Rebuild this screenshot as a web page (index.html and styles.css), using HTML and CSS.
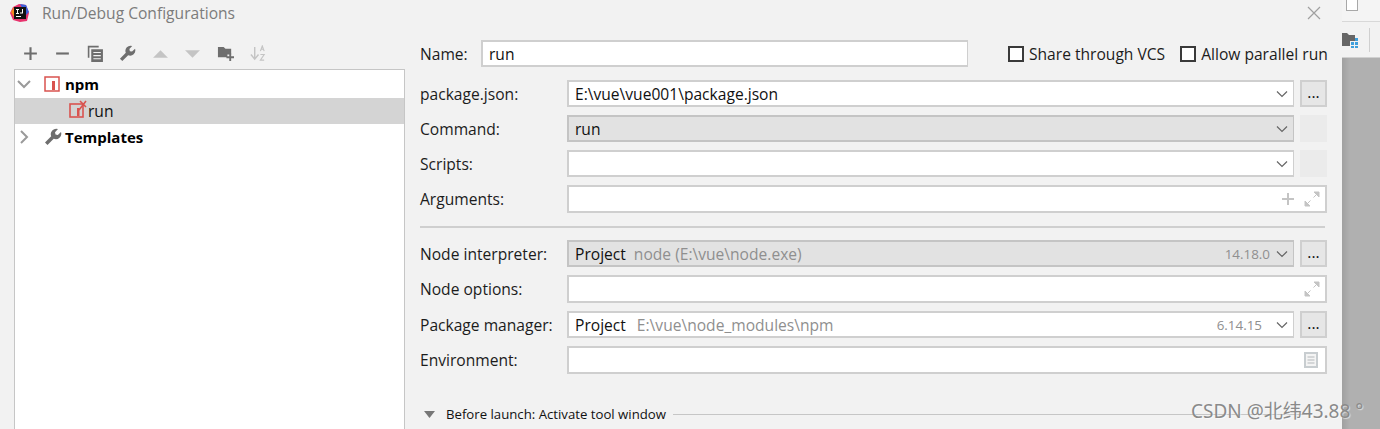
FILE: index.html
```html
<!DOCTYPE html>
<html lang="en">
<head>
<meta charset="utf-8">
<title>Run/Debug Configurations</title>
<link rel="stylesheet" href="styles.css">
</head>
<body>
<div class="screen">
  <div class="dialog">
    <header class="titlebar">
      <svg class="app-logo" width="20" height="20" viewBox="0 0 20 20">
        <path d="M3 4 9 1l7 1 3 8-2 8-7 1-7-2-3-7z" fill="#e8336d"/>
        <path d="M10 1l6 1 3 7-3 3z" fill="#3b5ed8"/>
        <path d="M1 9l3-5 3 5-3 5z" fill="#f58a1f"/>
        <rect x="4" y="4" width="12" height="12" fill="#111"/>
        <rect x="6" y="13" width="5" height="1" fill="#fff"/>
        <rect x="6" y="6" width="3" height="1" fill="#fff"/>
        <rect x="7" y="6" width="1" height="5" fill="#fff"/>
        <rect x="6" y="10" width="3" height="1" fill="#fff"/>
        <path d="M10 6h3v4.500h-3v-1h2V6" fill="#fff"/>
      </svg>
      <span class="title">Run/Debug Configurations</span>
      <svg class="close" width="14" height="14" viewBox="0 0 14 14"><path d="M1 1l12 12M13 1 1 13" stroke="#a0a0a0" stroke-width="1.200" fill="none"/></svg>
    </header>
    <div class="main">
      <aside class="left">
        <div class="toolbar">
          <svg class="tool" viewBox="0 0 16 16"><path d="M8 2v12M2 8h12" stroke="#6e6e6e" stroke-width="2" fill="none"/></svg>
          <svg class="tool" viewBox="0 0 16 16"><path d="M2 8h12" stroke="#6e6e6e" stroke-width="2" fill="none"/></svg>
          <svg class="tool" viewBox="0 0 16 16"><path d="M1.500 12V1.500H11" stroke="#6e6e6e" stroke-width="1.500" fill="none"/><rect x="4" y="4" width="11" height="12" fill="#6e6e6e"/><path d="M6 7h7M6 10h7M6 13h7" stroke="#f2f2f2" fill="none"/></svg>
          <svg class="tool" viewBox="0 0 18 18"><path d="M1 14.500 7.200 8.300A5.500 5.500 0 0 1 14 1L11 4.200 11.500 6.500 13.800 7 17 4A5.500 5.500 0 0 1 9.700 10.800L3.500 17z" fill="#6e6e6e"/></svg>
          <svg class="tool" viewBox="0 0 16 16"><path d="M1 12 8 5l7 7z" fill="#c4c4c4"/></svg>
          <svg class="tool" viewBox="0 0 16 16"><path d="M1 5h14l-7 7z" fill="#c4c4c4"/></svg>
          <svg class="tool" viewBox="0 0 18 18"><path d="M1 2h6l2 2h6v6h-4v3H1z" fill="#6e6e6e"/><path d="M14 9v8M10 13h8" stroke="#6e6e6e" stroke-width="2" fill="none"/></svg>
          <svg class="tool" viewBox="0 0 18 18"><path d="M5 2v12M1 10l4 5 4-5" stroke="#c4c4c4" stroke-width="1.500" fill="none"/><path d="M11 6.500 13 1l2 5.500M11.800 4.500h2.500M11 10h4l-4 6h4" stroke="#c4c4c4" stroke-width="1.200" fill="none"/></svg>
        </div>
        <div class="tree">
          <div class="tree-row parent">
            <svg class="chev" width="14" height="14" viewBox="0 0 14 14"><path d="M1 4l6 6 6-6" stroke="#9a9a9a" stroke-width="2" fill="none"/></svg>
            <svg class="type-icon" width="16" height="16" viewBox="0 0 16 16"><rect x="1" y="1" width="14" height="14" fill="#fff" stroke="#d9534f" stroke-width="1.500"/><rect x="8" y="5" width="3" height="9" fill="#d9534f"/></svg>
            <span class="tree-label bold">npm</span>
          </div>
          <div class="tree-row child selected">
            <svg class="run-icon" width="19" height="19" viewBox="0 0 19 19"><rect x="1" y="4" width="13" height="13" fill="none" stroke="#d9534f" stroke-width="1.600"/><rect x="8" y="8" width="2.500" height="8" fill="#d9534f"/><path d="M11 1l6 6M17 1l-7 9" stroke="#d9534f" stroke-width="1.600" fill="none"/></svg>
            <span class="tree-label">run</span>
          </div>
          <div class="tree-row templates">
            <svg class="chev" width="14" height="14" viewBox="0 0 14 14"><path d="M4 1l6 6-6 6" stroke="#9a9a9a" stroke-width="2" fill="none"/></svg>
            <svg class="type-icon" width="18" height="18" viewBox="0 0 18 18"><path d="M1 14.500 7.200 8.300A5.500 5.500 0 0 1 14 1L11 4.200 11.500 6.500 13.800 7 17 4A5.500 5.500 0 0 1 9.700 10.800L3.500 17z" fill="#6e6e6e"/></svg>
            <span class="tree-label bold">Templates</span>
          </div>
        </div>
      </aside>
      <section class="form">
        <div class="name-row">
          <label class="name-label">Name:</label>
          <div class="field name-field">run</div>
          <span class="check first"><i class="box"></i>Share through VCS</span>
          <span class="check"><i class="box"></i>Allow parallel run</span>
        </div>
        <div class="group">
          <div class="row"><label>package.json:</label><div class="field combo">E:\vue\vue001\package.json<svg class="caret" width="12" height="8" viewBox="0 0 12 8"><path d="M1 1.500 6 6.500l5-5" stroke="#666" stroke-width="1.200" fill="none"/></svg></div><span class="more">...</span></div>
          <div class="row"><label>Command:</label><div class="field combo off">run<svg class="caret" width="12" height="8" viewBox="0 0 12 8"><path d="M1 1.500 6 6.500l5-5" stroke="#666" stroke-width="1.200" fill="none"/></svg></div><span class="more blank"></span></div>
          <div class="row"><label>Scripts:</label><div class="field combo"><svg class="caret" width="12" height="8" viewBox="0 0 12 8"><path d="M1 1.500 6 6.500l5-5" stroke="#666" stroke-width="1.200" fill="none"/></svg></div><span class="more blank"></span></div>
          <div class="row wide"><label>Arguments:</label><div class="field">
            <svg class="plus" width="14" height="14" viewBox="0 0 14 14"><path d="M7 1v12M1 7h12" stroke="#c4c4c4" stroke-width="2" fill="none"/></svg>
            <svg class="expand" width="16" height="16" viewBox="0 0 16 16"><path d="M10 1h5v5zM1 10v5h5zM13 3 9.500 6.500M3 13l3.500-3.500" fill="#c4c4c4" stroke="#c4c4c4"/></svg>
          </div></div>
        </div>
        <hr class="sep">
        <div class="group lower">
          <div class="row"><label>Node interpreter:</label><div class="field combo off"><span class="pj">Project</span><span class="dim">node (E:\vue\node.exe)</span><span class="ver v1">14.18.0</span><svg class="caret" width="12" height="8" viewBox="0 0 12 8"><path d="M1 1.500 6 6.500l5-5" stroke="#666" stroke-width="1.200" fill="none"/></svg></div><span class="more">...</span></div>
          <div class="row wide"><label>Node options:</label><div class="field">
            <svg class="expand" width="16" height="16" viewBox="0 0 16 16"><path d="M10 1h5v5zM1 10v5h5zM13 3 9.500 6.500M3 13l3.500-3.500" fill="#c4c4c4" stroke="#c4c4c4"/></svg>
          </div></div>
          <div class="row"><label>Package manager:</label><div class="field combo"><span class="pj pj2">Project</span><span class="dim">E:\vue\node_modules\npm</span><span class="ver">6.14.15</span><svg class="caret" width="12" height="8" viewBox="0 0 12 8"><path d="M1 1.500 6 6.500l5-5" stroke="#666" stroke-width="1.200" fill="none"/></svg></div><span class="more">...</span></div>
          <div class="row wide"><label>Environment:</label><div class="field">
            <svg class="doc" width="14" height="16" viewBox="0 0 14 16"><rect width="14" height="16" fill="#c8cdd0"/><rect x="2" y="2" width="10" height="12" fill="#f4f4f4"/><path d="M3.500 5h7M3.500 8h7M3.500 11h7" stroke="#b4b8bb" fill="none"/></svg>
          </div></div>
        </div>
        <div class="before">
          <svg width="11" height="7" viewBox="0 0 11 7"><path d="M0 0h11L5.500 7z" fill="#777"/></svg>
          <span>Before launch: Activate tool window</span>
          <i class="before-line"></i>
        </div>
      </section>
    </div>
  </div>
  <div class="backdrop">
    <div class="strip-top"><i class="strip-box"></i></div>
    <div class="strip-tools">
      <svg width="16" height="16" viewBox="0 0 16 16"><path d="M0 1h5l2 2h6v6H8v5H0z" fill="#666"/><path d="M9 10h3v3H9zM13 10h3v3h-3zM9 14h3v2H9zM13 14h3v2h-3zM13 6h3v3h-3z" fill="#3f9fdc"/></svg>
      <i class="strip-div"></i>
    </div>
    <div class="strip-gray"></div>
  </div>
  <div class="watermark">CSDN @北纬43.88 °</div>
</div>
</body>
</html>
```
FILE: styles.css
```css
* { box-sizing: border-box; }
html, body { margin: 0; padding: 0; }
body { width: 1380px; height: 429px; overflow: hidden; font-family: "Open Sans", "Noto Sans", sans-serif; font-size: 15.600px; color: #1c1c1c; background: #f2f2f2; }
.screen { position: relative; display: flex; width: 1380px; height: 429px; overflow: hidden; }
.dialog { width: 1342px; height: 429px; background: #f2f2f2; display: flex; flex-direction: column; }
.titlebar { height: 25px; display: flex; align-items: center; padding-left: 10px; }
.app-logo { flex: none; }
.title { margin-left: 12px; color: #7c7c7c; font-size: 15.600px; }
.close { margin-left: auto; margin-right: 21px; margin-top: 0; }
.main { flex: 1; display: flex; min-height: 0; }
.left { width: 405px; margin-left: 14px; flex: none; display: flex; flex-direction: column; }
.toolbar { height: 44px; display: flex; align-items: center; padding-top: 13px; padding-left: 7.500px; }
.tool { flex: none; width: 17px; height: 17px; margin-right: 15.600px; }
.tree { flex: 1; width: 391px; background: #fff; border: 1px solid #c6c6c6; border-width: 1px 1px 0 1px; }
.tree-row { height: 28px; display: flex; align-items: center; }
.tree-row.child { height: 26px; padding-left: 54px; background: #d4d4d4; }
.tree-row.templates { height: 26px; }
.chev { margin-left: 2px; flex: none; }
.type-icon { margin-left: 13px; flex: none; }
.tree-label { margin-left: 5px; color: #111; font-size: 15.600px; }
.run-icon { flex: none; margin-top: -3px; }
.child .tree-label { margin-left: 0; }
.tree-label.bold { font-weight: 700; color: #000; font-size: 15px; }
.templates .tree-label { margin-left: 3px; }
.form { width: 907px; margin-left: 1px; display: flex; flex-direction: column; }
.name-row { height: 27px; margin-top: 15px; display: flex; align-items: center; }
.name-label { width: 61px; flex: none; }
.name-field { width: 487px; flex: none; }
.field { height: 100%; background: #fff; border: 2px solid #cfcfcf; border-width: 2px 1px 2px 2px; padding-left: 6px; display: flex; align-items: center; font-size: 15.600px; color: #111; }
.check { display: flex; align-items: center; white-space: nowrap; }
.check.first { margin-left: 40px; margin-right: 15px; }
.box { width: 16px; height: 16px; border: 2px solid #3a3a3a; background: #fff; margin-right: 5px; flex: none; }
.group { margin-top: 13px; display: flex; flex-direction: column; gap: 8px; }
.group.lower { margin-top: 12px; }
.row { height: 27px; display: flex; align-items: center; }
.row.wide { height: 28px; }
.row label { width: 147px; flex: none; }
.row .field { flex: none; width: 727px; }
.row.wide .field { width: 760px; justify-content: flex-end; padding-right: 5px; border-right-width: 2px; }
.combo { padding-right: 5px; }
.off { background: #e2e2e2; border-color: #c4c4c4; }
.caret { margin-left: auto; flex: none; }
.ver + .caret { margin-left: 0; }
.more { flex: none; width: 27px; height: 27px; margin-left: 6px; background: #e6e6e6; border: 2px solid #cfcfcf; display: flex; align-items: flex-start; justify-content: center; font-size: 15.600px; line-height: 21px; color: #111; }
.more.blank { background: #ebebeb; border-color: #ebebeb; }
.dim { color: #8f8f8f; margin-left: 8px; }
.pj2 + .dim { margin-left: 11px; }
.ver { margin-left: auto; color: #8f8f8f; font-size: 13.400px; margin-right: 14px; }
.ver.v1 { margin-right: 6px; }
.plus { margin-right: 9px; flex: none; }
.expand { flex: none; }
.doc { flex: none; margin-right: 2px; }
.sep { width: 905px; height: 2px; margin: 13px 0 0; border: 0; background: #cfcfcf; }
.before { margin-top: 31px; display: flex; align-items: center; font-size: 13.200px; color: #111; padding-left: 4px; }
.before span { margin-left: 11px; white-space: nowrap; }
.before-line { flex: 1; height: 1px; background: #c6c6c6; margin-left: 7px; margin-right: 20px; }
.backdrop { flex: 1; display: flex; flex-direction: column; }
.strip-top { height: 22px; background: #f4f4f4; border-bottom: 1px solid #d8d8d8; padding-left: 4px; }
.strip-box { display: block; width: 12px; height: 11px; border: 1px solid #a8a8a8; border-top: 0; background: #fff; }
.strip-tools { height: 36px; background: #f2f2f2; border-bottom: 1px solid #d0d0d0; display: flex; align-items: center; gap: 11px; }
.strip-div { width: 1px; height: 24px; background: #cfcfcf; }
.strip-gray { flex: 1; background: linear-gradient(90deg, #a0a0a0, #b0b0b0 8px); }
.watermark { position: absolute; left: 1191px; top: 399px; font-family: "Noto Sans", "Noto Sans CJK SC", sans-serif; font-size: 19px; line-height: 24px; color: #8a8a8a; text-shadow: 1px 1px 1px rgba(255,255,255,.6); white-space: nowrap; }
```
